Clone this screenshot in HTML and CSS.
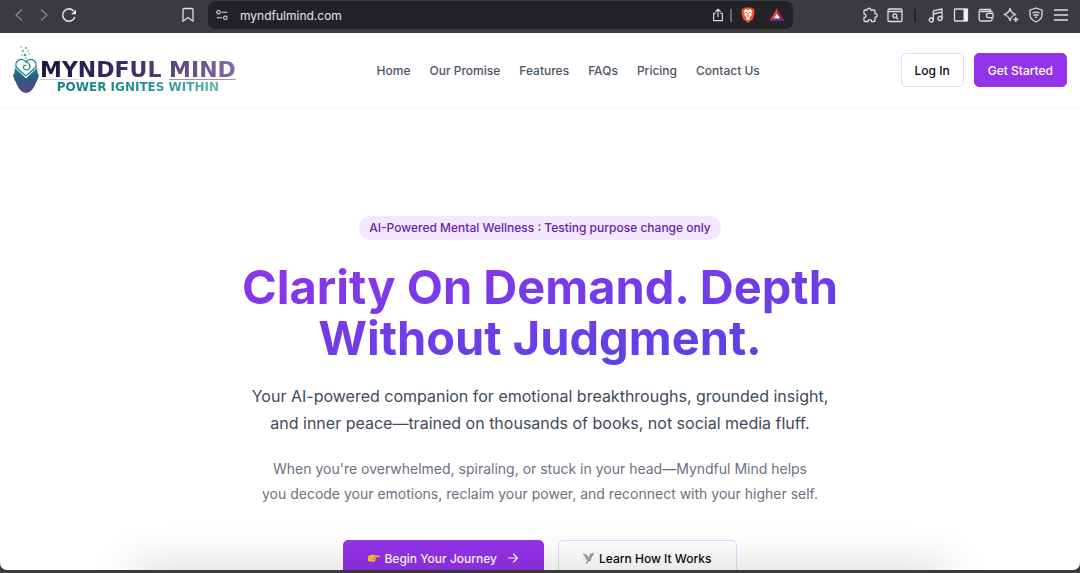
FILE: index.html
```html
<!DOCTYPE html>
<html lang="en">
<head>
    <meta charset="UTF-8">
    <meta name="viewport" content="width=device-width, initial-scale=1.0">
    <title>Myndful Mind</title>
    <link rel="stylesheet" href="styles.css">
</head>
<body>

    <div class="toolbar">
        <div class="tools-left">
            <button class="tool dim" aria-label="Back"><svg width="16" height="16" viewBox="0 0 16 16"><path d="M11 2.500 5 8l6 5.500"/></svg></button>
            <button class="tool dim" aria-label="Forward"><svg width="16" height="16" viewBox="0 0 16 16"><path d="M5 2.500 11 8l-6 5.500"/></svg></button>
            <button class="tool" aria-label="Reload"><svg width="16" height="16" viewBox="0 0 16 16"><path d="M13.800 10A6.200 6.200 0 1 1 12.600 4" stroke-width="1.600"/><path class="solid" d="M15 2.500v4.800h-4.800z"/></svg></button>
            <button class="tool bookmark" aria-label="Bookmark"><svg width="16" height="16" viewBox="0 0 16 16"><path d="M3 2.600Q3 1.500 4 1.500h8q1 0 1 1.100V14.300L8 10.600 3 14.300z"/></svg></button>
        </div>
        <div class="address">
            <button class="tool" aria-label="Site settings"><svg width="14" height="14" viewBox="0 0 16 16"><circle cx="4" cy="4.800" r="2"/><path d="M7.500 4.800H14M2 11.200h6"/><circle cx="11.800" cy="11.200" r="2"/></svg></button>
            <input class="url" type="text" value="myndfulmind.com" aria-label="Address">
            <button class="tool" aria-label="Share"><svg width="14" height="14" viewBox="0 0 16 16"><path d="M5.500 6H3v8.500h10V6h-2.500M8 10.500V1.500M5 4.300 8 1.300l3 3"/></svg></button>
            <span class="bar"></span>
            <button class="tool" aria-label="Shields"><svg width="16" height="16" viewBox="0 0 16 16"><path fill="#fb5422" stroke="none" d="M5 .5h6l1.200 1.300 1.500-.2 1 2-.6 1.500.5 1-2 6.300L8 15.700l-4.600-3.300-2-6.300.5-1-.6-1.500 1-2 1.500.2z"/><path fill="#fff" stroke="none" d="m8 3 2.500-.7L12.300 4.500l-1 2 .3 1.800-2.200 1.900.8 1.300L8 13.200l-2.200-1.700.8-1.300-2.200-1.900.3-1.800-1-2 1.800-2.200z"/><path stroke="#fb5422" stroke-width="1" d="m5 5.300 2 .6M11 5.300l-2 .6M8 6v2.600M6.400 8.500 8 9.300l1.600-.8"/></svg></button>
            <button class="tool rewards" aria-label="Rewards"><svg width="16" height="16" viewBox="0 0 16 16"><path fill="#ff4724" stroke="none" d="M8 1.500v5L5 11.500.5 14z"/><path fill="#9e1f63" stroke="none" d="M8 1.500 15.500 14 11 11.500 8 6.500z"/><path fill="#662d91" stroke="none" d="M.5 14 5 11.500h6l4.500 2.500z"/><path fill="#fff" stroke="none" d="m8 6.500 3 5H5z"/></svg></button>
        </div>
        <div class="tools-right">
            <button class="tool" aria-label="Extensions"><svg width="16" height="16" viewBox="0 0 16 16"><path d="M2 4Q2 3 3 3h2.300C4.800.600 9.200.600 8.700 3H12q1 0 1 1v2.700c2.800-.600 2.800 4 0 3.400V13.500q0 1-1 1H9.500c.4-2.600-3.800-2.600-3.400 0H3q-1 0-1-1v-3.200c2.600.4 2.600-3.600 0-3.200z"/></svg></button>
            <button class="tool" aria-label="Search tabs"><svg width="16" height="16" viewBox="0 0 16 16"><rect x="1" y="2" width="14" height="12.500" rx="1.200"/><path d="M1 4.500h14M9.200 10.200l2 2"/><circle cx="7.800" cy="8.800" r="1.900"/></svg></button>
            <span class="bar dark"></span>
            <button class="tool" aria-label="Media"><svg width="16" height="16" viewBox="0 0 16 16"><circle cx="3.300" cy="13" r="2"/><circle cx="12" cy="11.500" r="2"/><path d="M5.300 13V3.800L14 2v9.500M5.300 7 14 5.200"/></svg></button>
            <button class="tool" aria-label="Sidebar"><svg width="16" height="16" viewBox="0 0 16 16"><rect x="1.500" y="2" width="13" height="12" rx=".5"/><path class="solid" d="M10.500 2h4v12h-4z"/></svg></button>
            <button class="tool" aria-label="Wallet"><svg width="16" height="16" viewBox="0 0 16 16"><path d="M14 5.500V4.500H2.500M12.500 4.500V2.500H3Q1.200 2.500 1.200 4v8.500Q1.200 14 3 14h9.500q1.500 0 1.500-1.500V11"/><path d="M15 6.300H10.500q-2 0-2 2.200t2 2.200H15z"/></svg></button>
            <button class="tool" aria-label="Assistant"><svg width="16" height="16" viewBox="0 0 16 16"><path d="M7 1.500Q8 6 12.700 7.500 8 9 7 13.500 6 9 1 7.500 6 6 7 1.500z"/><path d="M12.800 10v5M10.300 12.500h5"/></svg></button>
            <button class="tool" aria-label="VPN"><svg width="16" height="16" viewBox="0 0 16 16"><path d="M8 1 14 3v5.500Q13.500 12.500 8 15 2.500 12.500 2 8.500V3z"/><path d="M4.500 6.300Q8 4 11.500 6.300M5.500 8.500Q8 7 10.500 8.500M7 10.500q1-.6 2 0"/></svg></button>
            <button class="tool" aria-label="Menu"><svg width="16" height="16" viewBox="0 0 16 16"><path d="M1 3h14M1 8h14M1 13h14"/></svg></button>
        </div>
    </div>

    <div class="page">
        <header class="header">
            <a class="logo" href="#">
                <svg width="26" height="50" viewBox="0 0 26 50">
                    <defs>
                        <linearGradient id="head" x1="0" y1="0" x2="0" y2="1">
                            <stop offset="0" stop-color="#13898a"/>
                            <stop offset=".4" stop-color="#28607c"/>
                            <stop offset="1" stop-color="#57408a"/>
                        </linearGradient>
                    </defs>
                    <g fill="#3aa6a3">
                        <circle cx="8" cy="2" r=".8"/><circle cx="13" cy="3" r="1"/><circle cx="10" cy="6" r="1"/><circle cx="15" cy="6" r=".8"/>
                        <circle cx="12" cy="10" r="1.300"/><circle cx="16" cy="9" r=".7"/><circle cx="9" cy="10" r=".7"/><circle cx="13" cy="13" r=".8"/>
                    </g>
                    <path fill="url(#head)" d="M2 21 13 33 24 21 24.500 28 26 30 24.500 35Q23 37 22 40 19 47 13 48 7 47 4 40 3 37 1.500 35L0 30 1.500 28z"/>
                    <path fill="#fff" stroke="#13898a" stroke-width="1.300" d="M13 31 4 23C0 17 8 11 13 17 18 11 26 17 22 23z"/>
                    <path fill="none" stroke="#13898a" stroke-width="1.200" d="M13 17C18 18 18 25 13.500 25 9 25 10 19 13.500 20.500"/>
                    <path fill="none" stroke="#fff" stroke-width="1" d="M2 22.500 13 33 24 22.500"/>
                </svg>
                <span class="logo-text">
                    <span class="logo-name">MYNDFUL MIND</span>
                    <span class="logo-line"></span>
                    <span class="logo-tag">POWER IGNITES WITHIN</span>
                </span>
            </a>
            <nav class="nav">
                <a href="#">Home</a>
                <a href="#">Our Promise</a>
                <a href="#">Features</a>
                <a href="#">FAQs</a>
                <a href="#">Pricing</a>
                <a href="#">Contact Us</a>
            </nav>
            <div class="actions">
                <button class="btn btn-outline">Log In</button>
                <button class="btn btn-primary">Get Started</button>
            </div>
        </header>

        <main class="hero">
            <div class="badge">AI-Powered Mental Wellness : Testing purpose change only</div>
            <h1>Clarity On Demand. Depth Without Judgment.</h1>
            <p class="lead">Your AI-powered companion for emotional breakthroughs, grounded insight, and inner peace—trained on thousands of books, not social media fluff.</p>
            <p class="text">When you're overwhelmed, spiraling, or stuck in your head—Myndful Mind helps you decode your emotions, reclaim your power, and reconnect with your higher self.</p>
            <div class="cta">
                <button class="btn btn-primary">
                    <svg width="12" height="12" viewBox="0 0 12 12"><path fill="#fbbf3c" d="M0 4 3 3 5.500 2.500 6.500 3.500H11.300Q12.300 4.500 11.300 5.300H8V6.500Q8 7.500 7.300 7.500V8.500Q7 9.700 6 9.700H3L0 9z"/><path fill="none" stroke="#d98320" stroke-width=".7" d="M5 5.500h3M5 7.500h2.300"/></svg>
                    Begin Your Journey
                    <svg class="arrow" width="12" height="12" viewBox="0 0 12 12"><path fill="none" stroke="#fff" stroke-width="1.200" stroke-linecap="round" stroke-linejoin="round" d="M1.500 6h9M6.500 2l4 4-4 4"/></svg>
                </button>
                <button class="btn btn-outline">
                    <svg width="12" height="12" viewBox="0 0 12 12"><path fill="#a9adb2" d="M0 1 3.500 2.500 5.500 5.500 7 1.500 11 .5 10.500 3 8.500 5.500 8 8.500 5.500 9.500 4.500 12 2.500 11 4.500 8.500Q2 7 2 5L.7 3.500z"/><path fill="none" stroke="#747980" stroke-width=".6" d="M2 2.500 5.500 6.500M9.500 2 7 6M4.500 8.500 8 8"/></svg>
                    Learn How It Works
                </button>
            </div>
        </main>
    </div>

</body>
</html>
```
FILE: styles.css
```css
* {
    box-sizing: border-box;
}
body {
    margin: 0;
    height: 100vh;
    display: flex;
    flex-direction: column;
    overflow: hidden;
    padding-bottom: 3px;
    background: #3d3a3a;
    font-family: Inter, "Liberation Sans", sans-serif;
}
button {
    font-family: inherit;
    cursor: pointer;
}

/* browser bar */
.toolbar {
    display: flex;
    flex-shrink: 0;
    height: 33px;
    padding: 1px 0 4px;
    background: #3b3a3f;
}
.tools-left {
    display: flex;
    align-items: center;
    width: 208px;
    padding: 0 8px 0 6px;
}
.tools-right {
    display: flex;
    align-items: center;
    justify-content: flex-end;
    width: 287px;
    padding-right: 7px;
}
.tool {
    display: flex;
    align-items: center;
    justify-content: center;
    width: 25px;
    height: 25px;
    padding: 0;
    border: none;
    background: none;
}
.tool svg {
    fill: none;
    stroke: #dcdde3;
    stroke-width: 1.3;
    stroke-linejoin: round;
}
.tool .solid {
    fill: #f0f0f4;
    stroke: none;
}
.dim svg {
    stroke: #85858c;
}
.bookmark {
    margin-left: auto;
}
.address {
    flex: 1;
    display: flex;
    align-items: center;
    padding: 0 4px 0 1px;
    border-radius: 7px;
    background: #232227;
}
.url {
    flex: 1;
    min-width: 0;
    padding: 0 6px;
    border: none;
    outline: none;
    background: none;
    color: #e6e6ea;
    font-family: inherit;
    font-size: 12px;
}
.bar {
    width: 2px;
    height: 13px;
    margin: 0 3px 0 0;
    background: #66666c;
}
.bar.dark {
    margin: 0 7px;
    background: #232227;
}
.rewards {
    margin-left: 4px;
}

/* site */
.page {
    position: relative;
    flex: 1;
    min-height: 0;
    overflow: hidden;
    background: #fff;
    border-radius: 0 0 7px 7px;
}
.page::after {
    content: "";
    position: absolute;
    left: 130px;
    right: 130px;
    bottom: -20px;
    height: 20px;
    box-shadow: 0 0 44px rgba(0, 0, 0, 0.24);
    pointer-events: none;
}
.header {
    display: flex;
    align-items: center;
    justify-content: space-between;
    height: 75px;
    padding: 0 13px;
    border-bottom: 1px solid #f5f5f7;
}
.logo {
    display: flex;
    align-items: center;
    gap: 1px;
    text-decoration: none;
}
.logo-text {
    display: flex;
    flex-direction: column;
    align-items: center;
    padding-top: 13px;
}
.logo-name {
    font-family: "DejaVu Sans", sans-serif;
    font-size: 22px;
    font-weight: bold;
    line-height: 19px;
    background: linear-gradient(90deg, #1b1440, #43306b 50%, #7f6ba8);
    background-clip: text;
    color: transparent;
}
.logo-line {
    width: 100%;
    height: 1px;
    background: linear-gradient(90deg, #c9c9d2 15%, transparent 25%, transparent 66%, #9c93b5 66%);
}
.logo-tag {
    font-family: "DejaVu Sans", sans-serif;
    font-size: 12px;
    font-weight: bold;
    line-height: 14px;
    background: linear-gradient(90deg, #147f83, #239490 60%, #62b7b2);
    background-clip: text;
    color: transparent;
}
.nav {
    display: flex;
    gap: 19px;
}
.nav a {
    color: #4b5563;
    font-size: 12px;
    font-weight: 500;
    text-decoration: none;
}
.actions {
    display: flex;
    gap: 10px;
}
.btn {
    height: 34px;
    padding: 0 13px;
    border: 1px solid #9333ea;
    border-radius: 5px;
    font-size: 12px;
    font-weight: 500;
}
.btn-primary {
    background: #9333ea;
    color: #fff;
}
.btn-outline {
    border-color: #e9d5ff;
    background: #fff;
    color: #09090b;
}
.hero {
    display: flex;
    flex-direction: column;
    align-items: center;
    padding: 108px 20px 60px;
    text-align: center;
}
.badge {
    padding: 0 10px;
    border-radius: 12px;
    background: #f3e8ff;
    color: #6b21a8;
    font-size: 12px;
    font-weight: 500;
    line-height: 24px;
}
h1 {
    max-width: 680px;
    margin: 21px 0 0;
    padding-bottom: 4px;
    font-size: 47px;
    font-weight: 700;
    line-height: 51px;
    background: linear-gradient(to bottom right, #9333ea, #4f46e5);
    background-clip: text;
    color: transparent;
}
.lead {
    max-width: 590px;
    margin: 16px 0 0;
    color: #414b5a;
    font-size: 16px;
    line-height: 27px;
}
.text {
    max-width: 560px;
    margin: 19px 0 0;
    color: #6b7280;
    font-size: 14px;
    line-height: 25px;
}
.cta {
    display: flex;
    gap: 14px;
    margin-top: 34px;
}
.cta .btn {
    display: flex;
    align-items: center;
    gap: 4px;
    height: 36px;
    padding: 0 24px;
}
.arrow {
    margin-left: 6px;
}
```
